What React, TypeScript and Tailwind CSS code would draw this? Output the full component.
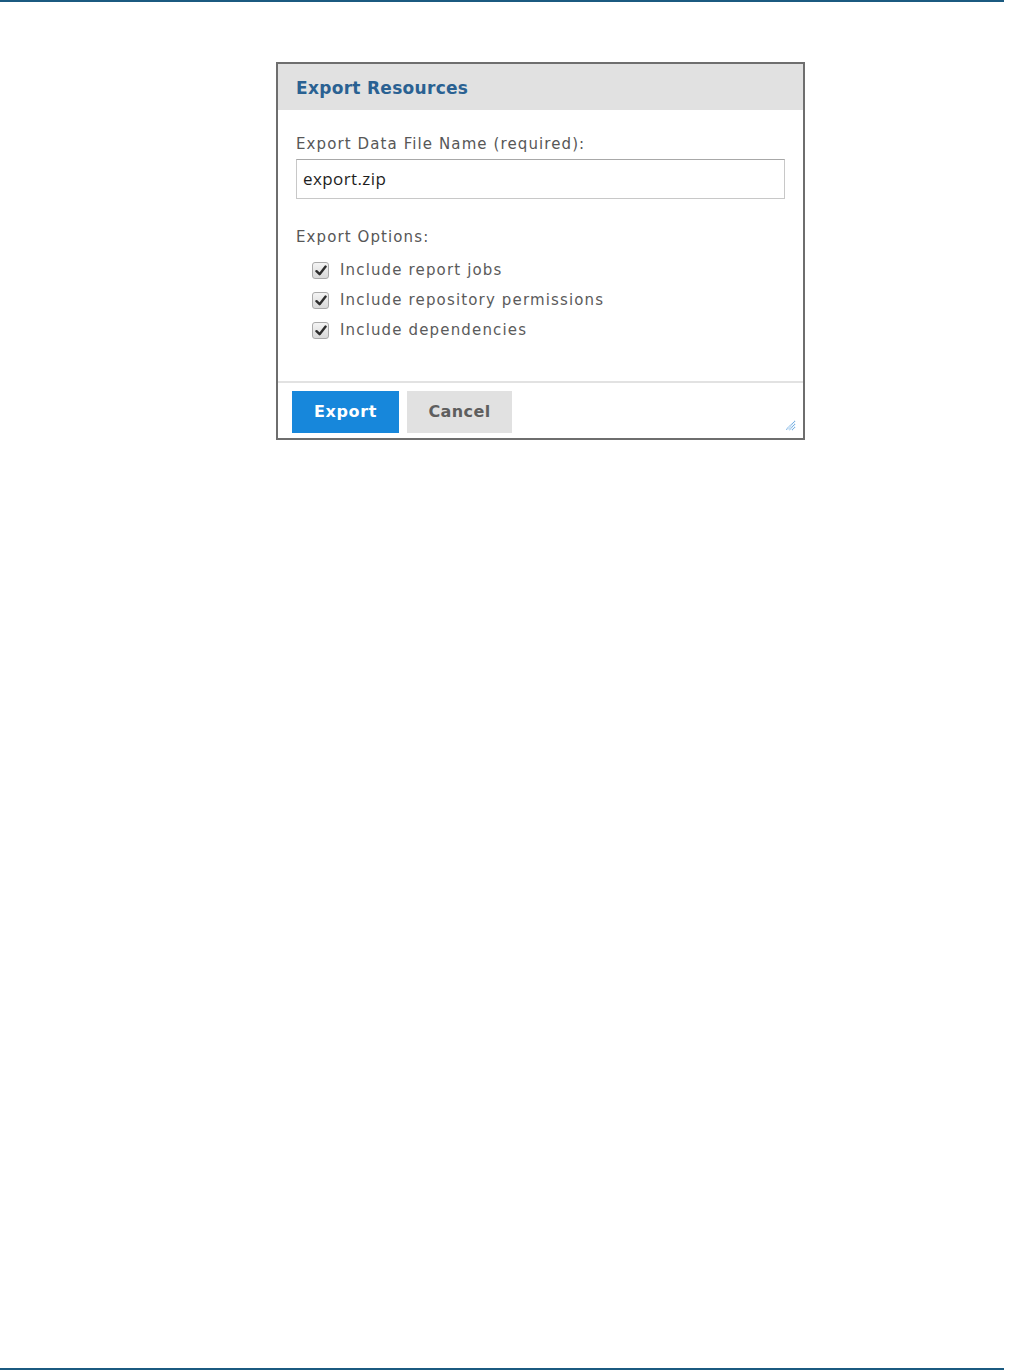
import React from "react";

const options = [
  "Include report jobs",
  "Include repository permissions",
  "Include dependencies",
];

function CheckBox() {
  return (
    <span className="flex h-[17px] w-[17px] items-center justify-center rounded-[3px] border border-[#a9a9a9] bg-gradient-to-b from-[#f4f4f4] to-[#d9d9d9]">
      <svg width="12" height="11" viewBox="0 0 12 11">
        <path d="M1.5 6.2 L4.6 9.2 L10.6 1.6" fill="none" stroke="#2e2e2e" strokeWidth="2.4" strokeLinecap="round" strokeLinejoin="round" />
      </svg>
    </span>
  );
}

export default function App() {
  return (
    <div className="flex h-[1370px] w-[1009px] flex-col bg-white font-['DejaVu_Sans',Verdana,sans-serif]">
      <div className="h-[2px] w-[1004px] bg-[#1b5a80]" />

      <div className="ml-[276px] mt-[60px] flex w-[529px] flex-col border-2 border-[#6e6e6e] bg-white">
        <div className="flex h-[46px] items-center px-[18px] pt-[3px] bg-[#e1e1e1]">
          <h2 className="text-[17px] font-bold tracking-[0.3px] text-[#2a6192]">Export Resources</h2>
        </div>

        <div className="flex flex-col px-[18px] pt-[24px]">
          <label className="text-[15px] leading-[20px] tracking-[1.1px] text-[#575757]">
            Export Data File Name (required):
          </label>
          <div className="mt-[5px] flex h-[40px] items-center border border-[#c8c8c8] border-t-[#a8a8a8] px-[6px]">
            <span className="font-['Open_Sans',sans-serif] text-[17px] tracking-[0.4px] text-[#1e1e1e]">export.zip</span>
          </div>

          <div className="mt-[28px] text-[15px] leading-[20px] tracking-[1.1px] text-[#575757]">Export Options:</div>

          <div className="mt-[8px] flex flex-col pl-[16px]">
            {options.map((o) => (
              <div key={o} className="flex h-[30px] items-center gap-[11px]">
                <CheckBox />
                <span className="text-[15px] tracking-[1.15px] text-[#5b5b5b]">{o}</span>
              </div>
            ))}
          </div>
        </div>

        <div className="relative mt-[36px] flex gap-[8px] border-t-2 border-[#e2e2e2] px-[14px] pb-[5px] pt-[8px]">
          <button className="flex h-[42px] w-[107px] items-center justify-center bg-[#1787db] text-[16px] font-bold tracking-[0.6px] text-white">
            Export
          </button>
          <button className="flex h-[42px] w-[105px] items-center justify-center bg-[#e1e1e1] text-[16px] font-bold tracking-[0.4px] text-[#5e5e5e]">
            Cancel
          </button>
          <svg className="absolute bottom-[7px] right-[7px]" width="11" height="11" viewBox="0 0 11 11">
            <path d="M10 1 L1 10 M10 4 L4 10 M10 7 L7 10" stroke="#6aa9e0" strokeWidth="1.2" strokeDasharray="1 0.6" />
          </svg>
        </div>
      </div>

      <div className="flex-1" />
      <div className="h-[2px] w-[1004px] bg-[#1b5a80]" />
    </div>
  );
}
